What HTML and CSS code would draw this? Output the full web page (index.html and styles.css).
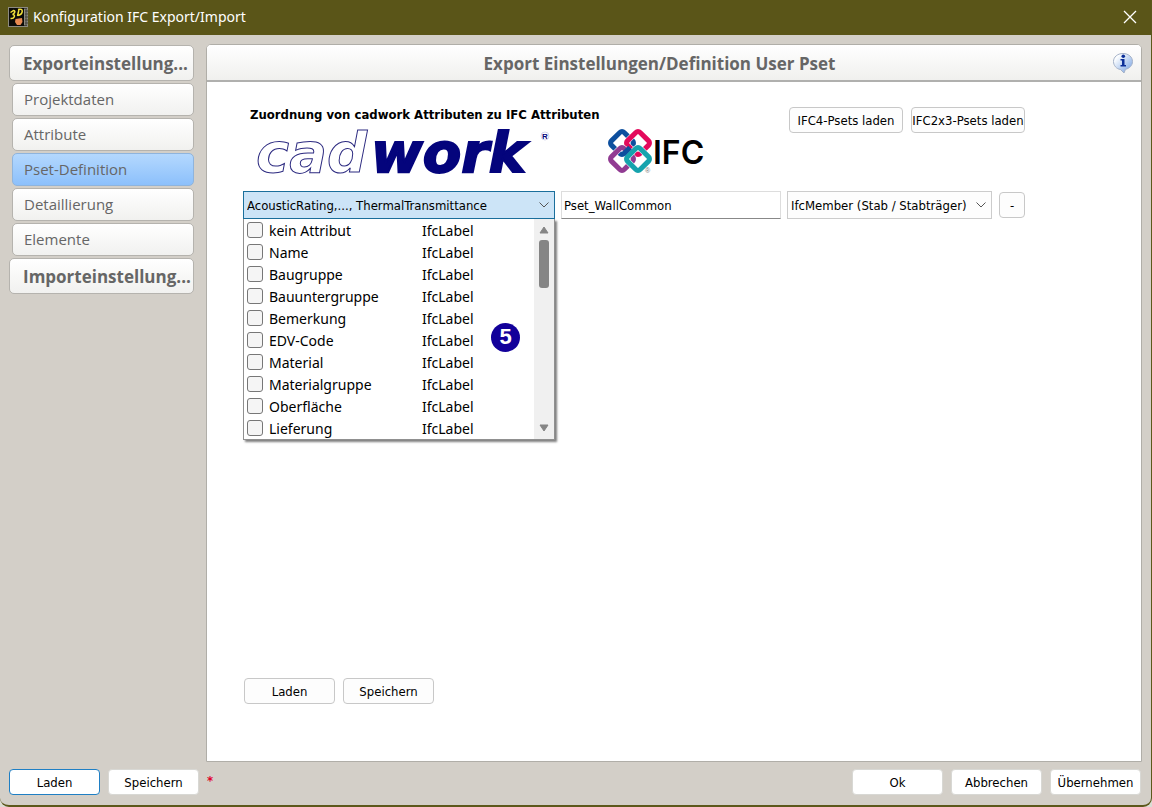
FILE: index.html
```html
<!DOCTYPE html>
<html lang="de">

<head>
    <meta charset="UTF-8">
    <meta name="viewport" content="width=device-width, initial-scale=1.0">
    <title>Konfiguration IFC Export/Import</title>
    <link rel="stylesheet" href="styles.css">
</head>

<body>
    <div class="dialog">
        <header class="titlebar">
            <svg class="app-icon" width="20" height="20" viewBox="0 0 20 20">
                <rect width="20" height="20" fill="#8c8a80" />
                <path d="M18 2v17M16 18.500h3M16 1.500h3M17 4h3M17 7h3M17 10h3M17 13h3M17 16h3" stroke="#45433a" />
                <rect x="1" y="1" width="15" height="18" fill="#0b0b08" />
                <path d="M2.500 5.500l3-2c2.500 0 1 3.500-1 4 3.500 0 2 4.500-2 4M11 2.500L9.500 9M10 2.500c6-2 5.500 5-.5 6" fill="none" stroke="#f4e23c" stroke-width="1.500" />
                <path d="M7.500 12l6.500-1 .5 4-2 3H9l-2-3z" fill="#e88a50" />
            </svg>
            <span class="titlebar-text">Konfiguration IFC Export/Import</span>
            <button class="close" type="button" aria-label="Schließen">
                <svg width="14" height="14" viewBox="0 0 14 14">
                    <path d="M1 1l12 12M13 1L1 13" fill="none" stroke="#fff" stroke-width="1.300" />
                </svg>
            </button>
        </header>

        <div class="content">
            <nav class="sidebar">
                <button class="nav-group" type="button">Exporteinstellung...</button>
                <button class="nav-item" type="button">Projektdaten</button>
                <button class="nav-item" type="button">Attribute</button>
                <button class="nav-item active" type="button">Pset-Definition</button>
                <button class="nav-item" type="button">Detaillierung</button>
                <button class="nav-item" type="button">Elemente</button>
                <button class="nav-group" type="button">Importeinstellung...</button>
            </nav>

            <main class="panel">
                <div class="panel-head">
                    <h1>Export Einstellungen/Definition User Pset</h1>
                    <button class="info" type="button" aria-label="Info">
                        <svg width="22" height="22" viewBox="0 0 22 22">
                            <defs>
                                <linearGradient id="bubble" x1="0" y1="0" x2="1" y2="1">
                                    <stop offset="0.2" stop-color="#fbfdff" />
                                    <stop offset="1" stop-color="#6d9be0" />
                                </linearGradient>
                            </defs>
                            <path d="M11 1.500c5.500 0 9.500 3.500 9.500 8 0 4-3 7-7 7.800L12 21l-3.500-3.500C4.500 17 1.500 13.500 1.500 9.500c0-4.500 4-8 9.500-8z" fill="url(#bubble)" stroke="#a5b2c8" />
                            <path d="M8.500 7h4v6H14v1.500H8.500V13H10V8.500H8.500z" fill="#0c2f98" />
                            <circle cx="11.300" cy="4.300" r="1.800" fill="#0c2f98" />
                        </svg>
                    </button>
                </div>

                <div class="panel-body">
                    <div class="intro">
                        <div>
                            <h2>Zuordnung von cadwork Attributen zu IFC Attributen</h2>
                            <div class="logos">
                                <svg class="cadwork" width="300" height="48" viewBox="0 0 300 48">
                                    <text class="logo-cad" x="6" y="45">cad</text>
                                    <text class="logo-work" x="121" y="45">work</text>
                                    <text class="logo-reg" x="292" y="12">R</text>
                                    <circle cx="295" cy="9" r="4" fill="none" stroke="#d5d5ec" />
                                </svg>
                                <svg class="ifc" width="100" height="48" viewBox="0 0 100 48">
                                    <defs>
                                        <rect id="ring" x="-9" y="-9" width="18" height="18" rx="3" transform="rotate(45)" />
                                    </defs>
                                    <g fill="none" stroke="#fff" stroke-width="6">
                                        <use href="#ring" x="16" y="16" stroke="#0d4f9e" stroke-width="5" />
                                        <use href="#ring" x="32" y="16" />
                                        <use href="#ring" x="32" y="16" stroke="#e30a5c" stroke-width="5" />
                                        <use href="#ring" x="16" y="32" />
                                        <use href="#ring" x="16" y="32" stroke="#913b92" stroke-width="5" />
                                        <use href="#ring" x="32" y="32" />
                                        <use href="#ring" x="32" y="32" stroke="#16a3ad" stroke-width="5" />
                                        <path d="M24 20.500l-7 7" stroke="#0d4f9e" stroke-width="5" />
                                    </g>
                                    <text class="logo-ifc" x="47" y="37">IFC</text>
                                    <text class="logo-mark" x="39" y="46">®</text>
                                </svg>
                            </div>
                        </div>
                        <div class="pset-buttons">
                            <button class="btn" type="button">IFC4-Psets laden</button>
                            <button class="btn" type="button">IFC2x3-Psets laden</button>
                        </div>
                    </div>

                    <div class="mapping">
                        <div class="combo combo-open">
                            <select aria-label="Attribute">
                                <option>AcousticRating,..., ThermalTransmittance</option>
                            </select>
                            <svg class="chevron" width="12" height="8" viewBox="0 0 12 8">
                                <path d="M1.500 1.500L6 6l4.500-4.500" />
                            </svg>
                            <div class="dropdown">
                                <div class="options">
                                    <label class="option"><input type="checkbox"><span>kein Attribut</span><span>IfcLabel</span></label>
                                    <label class="option"><input type="checkbox"><span>Name</span><span>IfcLabel</span></label>
                                    <label class="option"><input type="checkbox"><span>Baugruppe</span><span>IfcLabel</span></label>
                                    <label class="option"><input type="checkbox"><span>Bauuntergruppe</span><span>IfcLabel</span></label>
                                    <label class="option"><input type="checkbox"><span>Bemerkung</span><span>IfcLabel</span></label>
                                    <label class="option"><input type="checkbox"><span>EDV-Code</span><span>IfcLabel</span></label>
                                    <label class="option"><input type="checkbox"><span>Material</span><span>IfcLabel</span></label>
                                    <label class="option"><input type="checkbox"><span>Materialgruppe</span><span>IfcLabel</span></label>
                                    <label class="option"><input type="checkbox"><span>Oberfläche</span><span>IfcLabel</span></label>
                                    <label class="option"><input type="checkbox"><span>Lieferung</span><span>IfcLabel</span></label>
                                </div>
                                <div class="scrollbar">
                                    <svg width="10" height="8" viewBox="0 0 10 8">
                                        <path d="M5 1l4 6H1z" fill="#858585" stroke="#858585" stroke-linejoin="round" />
                                    </svg>
                                    <div class="thumb"></div>
                                    <svg width="10" height="8" viewBox="0 0 10 8">
                                        <path d="M5 7L1 1h8z" fill="#858585" stroke="#858585" stroke-linejoin="round" />
                                    </svg>
                                </div>
                                <span class="badge">5</span>
                            </div>
                        </div>
                        <input class="pset-name" type="text" value="Pset_WallCommon" aria-label="Pset">
                        <div class="combo combo-type">
                            <select aria-label="IFC Typ">
                                <option>IfcMember (Stab / Stabträger)</option>
                            </select>
                            <svg class="chevron" width="12" height="8" viewBox="0 0 12 8">
                                <path d="M1.500 1.500L6 6l4.500-4.500" />
                            </svg>
                        </div>
                        <button class="btn btn-remove" type="button">-</button>
                    </div>

                    <div class="panel-actions">
                        <button class="btn" type="button">Laden</button>
                        <button class="btn" type="button">Speichern</button>
                    </div>
                </div>
            </main>
        </div>

        <footer class="footer">
            <button class="btn btn-default" type="button">Laden</button>
            <button class="btn" type="button">Speichern</button>
            <span class="changed">*</span>
            <button class="btn btn-ok" type="button">Ok</button>
            <button class="btn" type="button">Abbrechen</button>
            <button class="btn" type="button">Übernehmen</button>
        </footer>
    </div>
</body>

</html>
```

FILE: styles.css
```css
* {
    box-sizing: border-box;
}

body {
    margin: 0;
    background: #dcdcd4;
    font-family: "DejaVu Sans Condensed", "DejaVu Sans", sans-serif;
    font-size: 13px;
    color: #000;
}

button,
input,
select {
    font: inherit;
    color: inherit;
}

.dialog {
    display: flex;
    flex-direction: column;
    min-height: 100vh;
    background: #d3cfc8;
    border: solid #5c581b;
    border-width: 0 1px 2px 0;
    border-radius: 0 0 9px 9px;
}

.titlebar {
    display: flex;
    align-items: center;
    height: 35px;
    padding: 0 14px 2px 8px;
    background: #5a5518;
    color: #fff;
    font-family: "Noto Sans", sans-serif;
    font-size: 14px;
}

.titlebar-text {
    margin-left: 5px;
}

.close {
    display: flex;
    margin-left: auto;
    padding: 0;
    border: 0;
    background: none;
}

.content {
    display: flex;
    flex: 1;
    gap: 12px;
    padding: 9px 9px 0;
}

.sidebar {
    display: flex;
    flex-direction: column;
    flex-shrink: 0;
    gap: 2px;
    width: 185px;
    padding-top: 1px;
}

.nav-group,
.nav-item {
    padding: 0 11px 2px;
    border: 1px solid #b5b3ae;
    border-radius: 5px;
    background: linear-gradient(#fff, #f1f1ef);
    color: #666;
    text-align: left;
    white-space: nowrap;
}

.nav-group {
    height: 36px;
    padding: 0 13px;
    font: bold 17px "Open Sans", sans-serif;
}

.nav-item {
    height: 33px;
    margin-left: 3px;
    font: 15px "Open Sans", sans-serif;
}

.nav-item.active {
    border-color: #8fb4dc;
    background: linear-gradient(#b4d8fe, #8cc0fb);
}

.panel {
    display: flex;
    flex: 1;
    flex-direction: column;
    border: 1px solid #b0aea8;
    border-radius: 5px 5px 0 0;
    background: #fff;
}

.panel-head {
    display: flex;
    align-items: center;
    height: 37px;
    padding: 0 7px 0 0;
    border-bottom: 2px solid #b0b0ae;
    border-radius: 4px 4px 0 0;
    background: linear-gradient(#fff, #f0f0ee);
}

.panel-head h1 {
    flex: 1;
    margin: 0;
    padding-top: 1px;
    color: #666;
    font: bold 17px "Open Sans", sans-serif;
    text-align: center;
}

.info {
    display: flex;
    padding: 0;
    border: 0;
    background: none;
}

.panel-body {
    display: flex;
    flex: 1;
    flex-direction: column;
    padding: 25px 36px 57px;
}

.intro {
    display: flex;
    gap: 83px;
    height: 84px;
}

.intro h2 {
    margin: 0 0 0 7px;
    font-size: 13px;
    line-height: 16px;
    white-space: nowrap;
}

.logos {
    display: flex;
    gap: 56px;
    margin: 4px 0 0 7px;
}

.logos svg {
    overflow: visible;
}

.logo-cad,
.logo-work {
    font: italic bold 56px "DejaVu Sans", sans-serif;
}

.logo-cad {
    fill: #fff;
    stroke: #2c2a80;
}

.logo-work {
    fill: #04047c;
    stroke: #04047c;
    stroke-width: 2;
}

.logo-reg {
    fill: #04047c;
    font: bold 8px "Liberation Sans", sans-serif;
}

.logo-ifc {
    font: 600 32px Inter, sans-serif;
}

.logo-mark {
    fill: #777;
    font: 7px "Liberation Sans", sans-serif;
}

.pset-buttons {
    display: flex;
    gap: 8px;
}

.btn {
    width: 91px;
    height: 26px;
    padding: 0;
    border: 1px solid #c8c8c8;
    border-radius: 4px;
    background: #fdfdfd;
    white-space: nowrap;
}

.pset-buttons .btn {
    width: 114px;
}

.mapping {
    display: flex;
    align-items: center;
    gap: 6px;
}

.combo {
    position: relative;
    height: 28px;
}

.combo select {
    width: 100%;
    height: 100%;
    padding: 0 3px;
    border: 1px solid #ccc;
    background: #fdfdfd;
    appearance: none;
}

.combo-open {
    width: 312px;
}

.combo-open select {
    border-color: #1a6f9c;
    background: #cce4f7;
}

.combo-type {
    width: 205px;
}

.chevron {
    position: absolute;
    top: 10px;
    right: 5px;
    fill: none;
    stroke: #555;
}

.pset-name {
    width: 220px;
    height: 28px;
    padding: 0 2px;
    border: 1px solid #ddd;
    border-bottom-color: #888;
    background: #fff;
}

.btn-remove {
    width: 26px;
    margin-left: 1px;
}

.dropdown {
    position: absolute;
    top: 28px;
    left: 0;
    display: flex;
    width: 100%;
    border: 1px solid #909090;
    border-top: 0;
    background: #fff;
    box-shadow: 2px 2px 2px rgba(0, 0, 0, .5);
}

.options {
    flex: 1;
}

.option {
    display: grid;
    grid-template-columns: 16px 147px auto;
    align-items: center;
    column-gap: 6px;
    height: 22px;
    padding-left: 3px;
    font: 14px "Noto Sans", sans-serif;
}

.option input {
    width: 16px;
    height: 16px;
    margin: 0;
    border: 1px solid #777;
    border-radius: 3px;
    background: #f5f5f5;
    appearance: none;
}

.scrollbar {
    display: flex;
    flex-direction: column;
    align-items: center;
    width: 20px;
    padding: 7px 0;
    background: #f0f0f0;
}

.thumb {
    width: 10px;
    height: 48px;
    margin: 6px 0 auto;
    border-radius: 3px;
    background: #858585;
}

.badge {
    position: absolute;
    top: 104px;
    left: 247px;
    width: 29px;
    height: 29px;
    border-radius: 50%;
    background: #12009a;
    color: #fff;
    font: bold 22px/28px "Liberation Sans", sans-serif;
    text-align: center;
}

.panel-actions {
    display: flex;
    gap: 8px;
    margin: auto 0 0 1px;
}

.footer {
    display: flex;
    gap: 8px;
    padding: 7px 10px 10px 9px;
}

.footer .btn {
    border-color: #d8d8d4;
    background: #fff;
}

.footer .btn-default {
    border-color: #1f7fc4;
}

.changed {
    color: #e00028;
    font-weight: bold;
    line-height: 24px;
}

.footer .btn-ok {
    margin-left: auto;
}
```
